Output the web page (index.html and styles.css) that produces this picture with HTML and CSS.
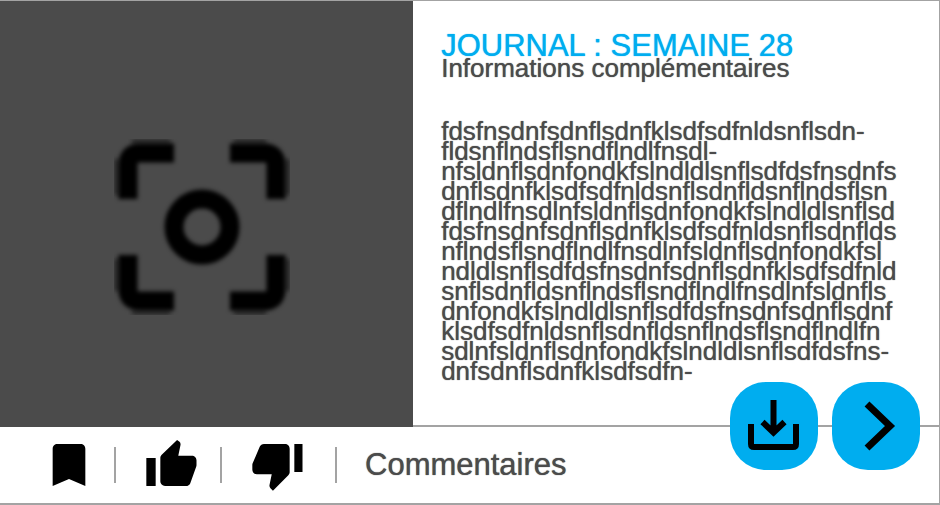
FILE: index.html
```html
<!DOCTYPE html>
<html lang="fr">
<head>
<meta charset="utf-8">
<title>Journal : semaine 28</title>
<link rel="stylesheet" href="styles.css">
</head>
<body>
<article class="card">
  <div class="main">
    <div class="preview">
      <svg class="focus" viewBox="0 0 176 176" role="img" aria-label="Aperçu">
        <g class="halo">
          <path d="M18 3H56M120 3H152M18 173H56M120 173H152M3 20V56M3 120V152M173 20V56M173 120V152"/>
        </g>
        <g class="frame">
          <path d="M14 60V26Q14 14 26 14H60"/>
          <path d="M116 14H150Q162 14 162 26V60"/>
          <path d="M162 116V150Q162 162 150 162H116"/>
          <path d="M60 162H26Q14 162 14 150V116"/>
          <circle cx="88" cy="88" r="28"/>
        </g>
      </svg>
    </div>
    <div class="content">
      <h1 class="title">JOURNAL : SEMAINE 28</h1>
      <h2 class="subtitle">Informations complémentaires</h2>
      <p class="text">fdsfnsdnfsdnflsdnfklsdfsdfnldsnflsdn-<br>fldsnflndsflsndflndlfnsdl-<br>nfsldnflsdnfondkfslndldlsnflsdfdsfnsdnfs<br>dnflsdnfklsdfsdfnldsnflsdnfldsnflndsflsn<br>dflndlfnsdlnfsldnflsdnfondkfslndldlsnflsd<br>fdsfnsdnfsdnflsdnfklsdfsdfnldsnflsdnflds<br>nflndsflsndflndlfnsdlnfsldnflsdnfondkfsl<br>ndldlsnflsdfdsfnsdnfsdnflsdnfklsdfsdfnld<br>snflsdnfldsnflndsflsndflndlfnsdlnfsldnfls<br>dnfondkfslndldlsnflsdfdsfnsdnfsdnflsdnf<br>klsdfsdfnldsnflsdnfldsnflndsflsndflndlfn<br>sdlnfsldnflsdnfondkfslndldlsnflsdfdsfns-<br>dnfsdnflsdnfklsdfsdfn-</p>
    </div>
  </div>
  <footer class="bar">
    <button class="icon-button save" type="button" aria-label="Enregistrer">
      <svg viewBox="0 0 24 24"><path d="M17 3H7c-1.1 0-2 .9-2 2v16l7-3 7 3V5c0-1.1-.9-2-2-2z"/></svg>
    </button>
    <span class="divider"></span>
    <button class="icon-button like" type="button" aria-label="J'aime">
      <svg viewBox="0 0 24 24"><path d="M1 21h4V9H1v12zm21.500-11c0-1.1-.9-2-2-2h-5.810l.95-4.57.03-.32c0-.41-.17-.79-.44-1.06L14.17 1.300 7.59 7.590C7.22 7.95 7 8.45 7 9v10c0 1.1.9 2 2 2h9c.83 0 1.54-.5 1.84-1.22l2.520-7.050c.09-.23.14-.47.14-.73v-2z"/></svg>
    </button>
    <span class="divider"></span>
    <button class="icon-button dislike" type="button" aria-label="Je n'aime pas">
      <svg viewBox="0 0 24 24"><path d="M15 3H6c-.83 0-1.54.5-1.84 1.22l-3.02 7.05c-.09.23-.14.47-.14.73v2c0 1.1.9 2 2 2h6.31l-.95 4.57-.03.32c0 .41.17.79.44 1.06L9.83 23l6.59-6.59c.36-.36.58-.86.58-1.41V5c0-1.1-.9-2-2-2zm4 0v12h3.500V3h-3.500z"/></svg>
    </button>
    <span class="divider"></span>
    <a class="comments" href="#commentaires">Commentaires</a>
  </footer>
  <div class="actions">
    <button class="action" type="button" aria-label="Télécharger">
      <svg viewBox="0 0 88 88"><path class="tray" d="M21 42V62Q21 65 24 65H63Q66 65 66 62V42"/><path class="arrow" d="M43.500 18V49M32.500 40L43.500 50.500L54.500 40"/></svg>
    </button>
    <button class="action" type="button" aria-label="Suivant">
      <svg viewBox="0 0 88 88"><path class="chevron" d="M35 22L58 44L35 66"/></svg>
    </button>
  </div>
</article>
</body>
</html>
```
FILE: styles.css
```css
* {
  box-sizing: border-box;
}

body {
  margin: 0;
  font-family: "Liberation Sans", Arial, sans-serif;
  font-variant-ligatures: none;
  color: #4b4b4b;
  background: #fff;
}

.card {
  position: relative;
  display: flex;
  flex-direction: column;
  min-height: 100vh;
  border: solid #a3a3a3;
  border-width: 1px 1px 2px 0;
}

.main {
  flex: 1;
  display: grid;
  grid-template-columns: 44fr 56fr;
}

.preview {
  display: flex;
  align-items: center;
  justify-content: center;
  padding: 26px 10px 0 0;
  background: #4b4b4b;
}

.focus {
  width: 176px;
  height: 176px;
  fill: none;
  stroke: #000;
}

.halo {
  stroke: #2b2b2b;
  stroke-width: 6;
  filter: blur(2px);
}

.frame {
  stroke-width: 19;
  filter: blur(2px);
}

.content {
  min-width: 0;
  padding: 34px 28px 36px;
  border-bottom: 2px solid #a3a3a3;
}

.title,
.subtitle,
.text {
  margin: 0;
  font-weight: 400;
  white-space: nowrap;
}

.title,
.subtitle,
.text,
.comments {
  text-shadow: 0 0 1px currentColor;
}

.title {
  font-size: 31px;
  line-height: 22px;
  color: #00adef;
}

.subtitle {
  font-size: 26px;
  line-height: 22px;
}

.text {
  margin-top: 42px;
  font-size: 26px;
  line-height: 20px;
}

.bar {
  display: flex;
  align-items: center;
  height: 76px;
  padding-left: 41px;
}

.icon-button {
  width: 56px;
  height: 56px;
  padding: 0;
  border: 0;
  background: none;
}

.icon-button svg,
.action svg {
  display: block;
  width: 100%;
  height: 100%;
}

.save {
  margin-right: 17px;
}

.like {
  margin: 0 20px 0 28px;
}

.dislike {
  margin: 0 29px 0 28px;
}

.divider {
  width: 2px;
  height: 36px;
  background: #a3a3a3;
}

.comments {
  margin-left: 28px;
  font-size: 31px;
  line-height: 36px;
  color: inherit;
  text-decoration: none;
}

.actions {
  position: absolute;
  right: 19px;
  bottom: 33px;
  display: flex;
  gap: 14px;
}

.action {
  width: 88px;
  height: 88px;
  padding: 0;
  border: 0;
  border-radius: 36px;
  background: #00adef;
}

.action svg {
  fill: none;
  stroke: #000;
  stroke-width: 6;
}

.action .chevron {
  stroke-width: 7;
}
```
